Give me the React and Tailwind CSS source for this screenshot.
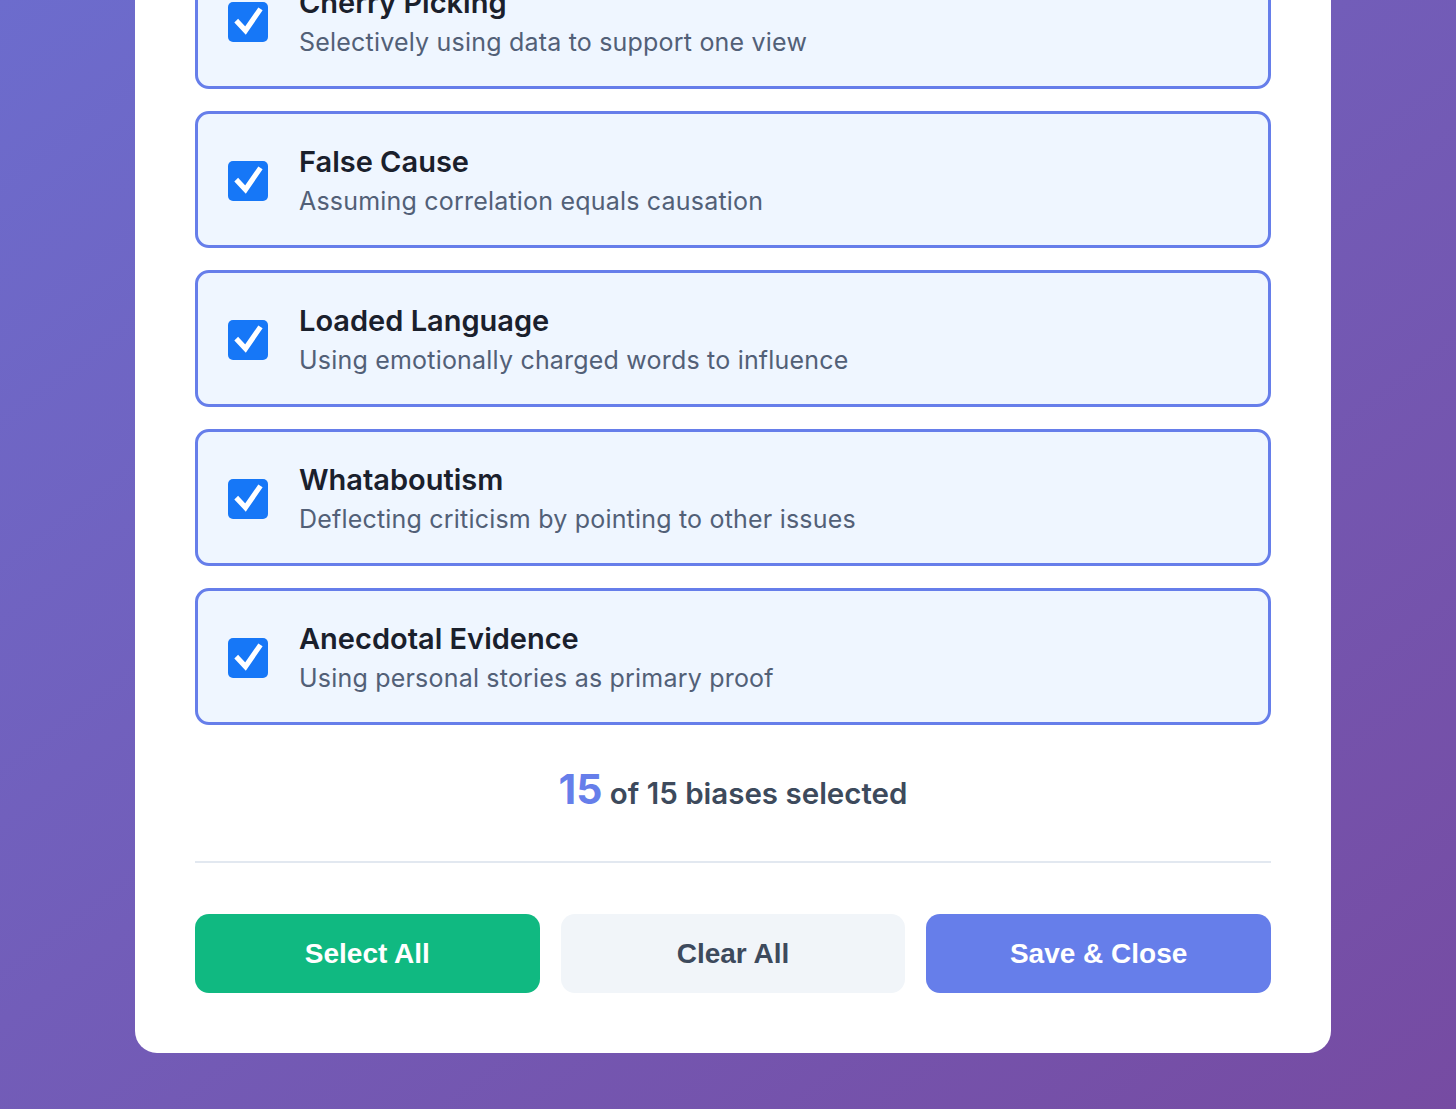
import React from "react";

const items = [
  { t: "Cherry Picking", d: "Selectively using data to support one view" },
  { t: "False Cause", d: "Assuming correlation equals causation" },
  { t: "Loaded Language", d: "Using emotionally charged words to influence" },
  { t: "Whataboutism", d: "Deflecting criticism by pointing to other issues" },
  { t: "Anecdotal Evidence", d: "Using personal stories as primary proof" },
];

function Check() {
  return (
    <div className="w-[40px] h-[40px] shrink-0 rounded-[5px] bg-[#1677f7] flex items-center justify-center">
      <svg width="40" height="40" viewBox="0 0 40 40" fill="none">
        <path d="M10 20.5l7.5 8L31 9" stroke="white" strokeWidth="5.2" strokeLinecap="square" strokeLinejoin="miter" />
      </svg>
    </div>
  );
}

export default function App() {
  return (
    <div className="w-[1456px] h-[1109px] overflow-hidden bg-gradient-to-br from-[#6c6ccd] to-[#764ba2] font-['Inter',sans-serif]">
      <div className="ml-[135px] w-[1196px] mt-[-108px] bg-white rounded-[22px] px-[60px] pt-[60px] pb-[60px]">
        <div className="flex flex-col gap-[22px]">
          {items.map((it) => (
            <div
              key={it.t}
              className="flex items-center gap-[31px] border-[3px] border-[#667eea] rounded-[14px] bg-[#eff6ff] pl-[30px] pt-[28px] pb-[25px]"
            >
              <Check />
              <div className="flex flex-col">
                <div className="text-[29px] leading-[40px] font-semibold text-[#1a202c]">{it.t}</div>
                <div className="text-[25px] leading-[38px] text-[#526077] tracking-[0.2px]">{it.d}</div>
              </div>
            </div>
          ))}
        </div>
        <div className="mt-[42px] text-center leading-[44px]">
          <span className="text-[41px] font-bold text-[#667eea]">15</span>
          <span className="text-[29.5px] font-semibold text-[#3d4a5c]"> of 15 biases selected</span>
        </div>
        <div className="mt-[41px] h-[2px] bg-[#e2e8f0]" />
        <div className="mt-[51px] grid grid-cols-3 gap-[21px] font-['Liberation_Sans',Arial,sans-serif]">
          <button className="h-[79px] rounded-[14px] bg-[#10b981] text-white text-[28px] font-bold">Select All</button>
          <button className="h-[79px] rounded-[14px] bg-[#f1f5f9] text-[#3d4a5c] text-[28px] font-bold">Clear All</button>
          <button className="h-[79px] rounded-[14px] bg-[#667eea] text-white text-[28px] font-bold">Save &amp; Close</button>
        </div>
      </div>
    </div>
  );
}
